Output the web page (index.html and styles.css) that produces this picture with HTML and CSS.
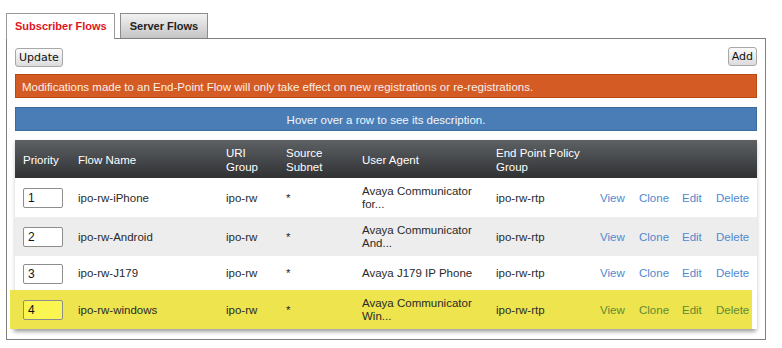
FILE: index.html
```html
<!DOCTYPE html>
<html lang="en">
<head>
    <meta charset="UTF-8">
    <meta name="viewport" content="width=device-width, initial-scale=1.0">
    <title>End-Point Flows</title>
    <link rel="stylesheet" href="styles.css">
</head>
<body>
    <div class="page">
        <div class="tabs">
            <div class="tab active">Subscriber Flows</div>
            <div class="tab">Server Flows</div>
        </div>
        <div class="panel">
            <div class="toolbar">
                <button class="btn">Update</button>
                <button class="btn">Add</button>
            </div>
            <div class="notice warn">Modifications made to an End-Point Flow will only take effect on new registrations or re-registrations.</div>
            <div class="notice info">Hover over a row to see its description.</div>

            <table class="flows">
                <colgroup>
                    <col style="width:55px">
                    <col style="width:148px">
                    <col style="width:60px">
                    <col style="width:76px">
                    <col style="width:134px">
                    <col style="width:104px">
                    <col style="width:39px">
                    <col style="width:43px">
                    <col style="width:34px">
                    <col style="width:49px">
                </colgroup>
                <thead>
                    <tr>
                        <th>Priority</th>
                        <th>Flow Name</th>
                        <th>URI Group</th>
                        <th>Source Subnet</th>
                        <th>User Agent</th>
                        <th>End Point Policy Group</th>
                        <th colspan="4"></th>
                    </tr>
                </thead>
                <tbody>
                    <tr>
                        <td><input class="prio" type="text" value="1"></td>
                        <td>ipo-rw-iPhone</td>
                        <td>ipo-rw</td>
                        <td>*</td>
                        <td>Avaya Communicator for...</td>
                        <td>ipo-rw-rtp</td>
                        <td><a href="#">View</a></td>
                        <td><a href="#">Clone</a></td>
                        <td><a href="#">Edit</a></td>
                        <td><a href="#">Delete</a></td>
                    </tr>
                    <tr class="alt">
                        <td><input class="prio" type="text" value="2"></td>
                        <td>ipo-rw-Android</td>
                        <td>ipo-rw</td>
                        <td>*</td>
                        <td>Avaya Communicator And...</td>
                        <td>ipo-rw-rtp</td>
                        <td><a href="#">View</a></td>
                        <td><a href="#">Clone</a></td>
                        <td><a href="#">Edit</a></td>
                        <td><a href="#">Delete</a></td>
                    </tr>
                    <tr class="single">
                        <td><input class="prio" type="text" value="3"></td>
                        <td>ipo-rw-J179</td>
                        <td>ipo-rw</td>
                        <td>*</td>
                        <td>Avaya J179 IP Phone</td>
                        <td>ipo-rw-rtp</td>
                        <td><a href="#">View</a></td>
                        <td><a href="#">Clone</a></td>
                        <td><a href="#">Edit</a></td>
                        <td><a href="#">Delete</a></td>
                    </tr>
                    <tr class="hovered">
                        <td><input class="prio" type="text" value="4"></td>
                        <td>ipo-rw-windows</td>
                        <td>ipo-rw</td>
                        <td>*</td>
                        <td>Avaya Communicator Win...</td>
                        <td>ipo-rw-rtp</td>
                        <td><a href="#">View</a></td>
                        <td><a href="#">Clone</a></td>
                        <td><a href="#">Edit</a></td>
                        <td><a href="#">Delete</a></td>
                    </tr>
                </tbody>
            </table>
        </div>
    </div>
</body>
</html>
```

FILE: styles.css
```css
body {
    margin: 0;
    background: #fff;
    font-family: "Liberation Sans", Arial, sans-serif;
    color: #333;
}
.page {
    padding: 13px 0 0 6px;
    width: 760px;
}
.tabs {
    display: flex;
    gap: 5px;
    margin-bottom: -1px;
    position: relative;
}
.tab {
    height: 24px;
    line-height: 24px;
    padding: 0 9px;
    border: 1px solid #8c8c8c;
    border-bottom: none;
    font-size: 11px;
    font-weight: bold;
    color: #222;
    background: linear-gradient(#f2f2f2, #c4c4c4);
}
.tab.active {
    height: 25px;
    background: #fff;
    color: #e0141e;
    border-color: #9a9a9a;
    padding: 0 7px 0 8px;
}
.panel {
    box-sizing: border-box;
    width: 760px;
    border: 1px solid #7f7f7f;
    padding: 9px 8px 10px;
    background: #fff;
}
.toolbar {
    display: flex;
    justify-content: space-between;
    align-items: flex-start;
    margin-bottom: 7px;
}
.btn {
    font-family: "DejaVu Sans", Tahoma, sans-serif;
    font-size: 11px;
    color: #111;
    height: 19px;
    padding: 0 3px;
    border: 1px solid #a8a8a8;
    border-radius: 3px;
    background: linear-gradient(#fafafa, #dcdcdc);
}
.btn:last-child {
    margin-top: -1px;
}
.notice {
    height: 24px;
    line-height: 24px;
    font-size: 11.5px;
    color: #fff;
    padding: 0 6px;
    box-sizing: border-box;
}
.warn {
    background: #d45b23;
    border: 1px solid #b84a17;
    color: #fbeee6;
    margin-bottom: 9px;
}
.info {
    background: #4a7db5;
    border: 1px solid #3b6a9c;
    text-align: center;
    margin-bottom: 9px;
    color: #f2f6fb;
}
.flows {
    width: 742px;
    table-layout: fixed;
    border-collapse: collapse;
    font-size: 11.5px;
    box-shadow: 0 2px 4px rgba(0, 0, 0, 0.22);
}
.flows th {
    height: 38px;
    box-sizing: border-box;
    padding: 5px 8px 4px;
    text-align: left;
    font-weight: normal;
    line-height: 14px;
    color: #fff;
    background: linear-gradient(#5e6164, #2f3133);
    vertical-align: middle;
}
.flows td {
    padding: 7px 8px 6px;
    line-height: 13px;
    vertical-align: middle;
    color: #2a2a2a;
}
.flows tbody tr {
    background: #fff;
    height: 39px;
}
.flows tr.alt {
    background: #ededed;
}
.flows tr.single {
    height: 34px;
}
.flows tr.hovered {
    height: 37px;
    background: linear-gradient(to right, #ede44e calc(100% - 5px), #fff calc(100% - 5px));
    box-shadow: -5px 0 0 #ede44e, -2px 3px 4px rgba(0, 0, 0, 0.22);
}
.flows a {
    color: #5089cf;
    text-decoration: none;
}
.flows tr.hovered a {
    color: #5f8a35;
}
.prio {
    box-sizing: border-box;
    width: 40px;
    height: 20px;
    padding: 0 4px;
    border: 1px solid #8d8d8d;
    border-radius: 2px;
    font-family: "Liberation Sans", Arial, sans-serif;
    font-size: 12px;
    color: #111;
    background: #fff;
}
.hovered .prio {
    background: #fbf552;
}
```
